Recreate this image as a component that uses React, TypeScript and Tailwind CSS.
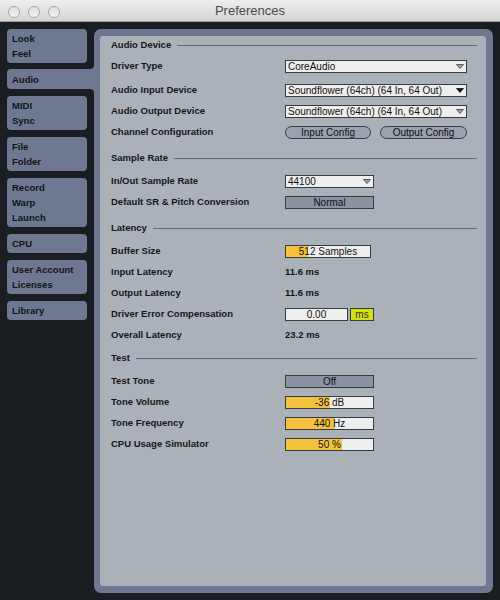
import React from 'react';

const font = { fontFamily: '"Liberation Sans", Arial, sans-serif' };

type Tab = { lines: string[]; active?: boolean };

const tabs: Tab[] = [
  { lines: ['Look', 'Feel'] },
  { lines: ['Audio'], active: true },
  { lines: ['MIDI', 'Sync'] },
  { lines: ['File', 'Folder'] },
  { lines: ['Record', 'Warp', 'Launch'] },
  { lines: ['CPU'] },
  { lines: ['User Account', 'Licenses'] },
  { lines: ['Library'] },
];

const Arrow = ({ solid }: { solid?: boolean }) => (
  <svg width="8" height="5" viewBox="0 0 8 5" className="shrink-0">
    <polygon
      points="0.5,0.5 7.5,0.5 4,4.5"
      fill={solid ? '#111' : '#9aa1ad'}
      stroke={solid ? '#111' : '#3b3f46'}
      strokeWidth="0.8"
    />
  </svg>
);

const Header = ({ title, className = '' }: { title: string; className?: string }) => (
  <div className={`h-[16px] flex items-center ${className}`}>
    <span className="text-[9.5px] font-bold text-[#161616]">{title}</span>
    <div className="flex-1 h-px bg-[#5e6880] ml-[6px]" />
  </div>
);

const Row = ({ label, children, className = '' }: { label: string; children?: React.ReactNode; className?: string }) => (
  <div className={`h-[21px] flex items-center ${className}`}>
    <div className="w-[174px] shrink-0 text-[9.5px] font-bold text-[#161616]">{label}</div>
    {children}
  </div>
);

const Select = ({ value, width, solid }: { value: string; width: string; solid?: boolean }) => (
  <div className={`${width} h-[13px] border border-[#363a41] bg-[#eeeeee] flex items-center justify-between pl-[2px] pr-[2px]`}>
    <span className="text-[10px] leading-none text-[#111]">{value}</span>
    <Arrow solid={solid} />
  </div>
);

const Toggle = ({ value }: { value: string }) => (
  <div className="w-[89px] h-[13px] border border-[#363a41] bg-[#8a93a2] flex items-center justify-center">
    <span className="text-[10px] leading-none text-[#111]">{value}</span>
  </div>
);

const Slider = ({ value, width, fill }: { value: string; width: string; fill: string }) => (
  <div className={`${width} h-[13px] border border-[#363a41] bg-[#eeeeee] relative flex items-center justify-center`}>
    <div className={`absolute left-0 top-0 bottom-0 ${fill} bg-[#f4c23f]`} />
    <span className="relative text-[10px] leading-none text-[#111]">{value}</span>
  </div>
);

const Pill = ({ label, width }: { label: string; width: string }) => (
  <div className={`${width} h-[13px] rounded-full border border-[#363a41] bg-[#9aa2ae] flex items-center justify-center`}>
    <span className="text-[10px] leading-none text-[#111]">{label}</span>
  </div>
);

const Value = ({ v }: { v: string }) => (
  <span className="text-[9.5px] font-bold text-[#161616]">{v}</span>
);

export default function App() {
  return (
    <div className="w-[500px] h-[600px] flex flex-col bg-[#1a1e23] overflow-hidden" style={font}>
      {/* title bar */}
      <div className="h-[22px] shrink-0 relative flex items-center justify-center bg-gradient-to-b from-[#eeeeee] to-[#d4d4d4] border-b border-[#9c9c9c]">
        <div className="absolute left-[8px] top-[6px] flex gap-[8px]">
          {[0, 1, 2].map(i => (
            <div key={i} className="w-[12px] h-[12px] rounded-full border border-[#a9a9a9] bg-gradient-to-b from-[#dcdcdc] to-[#f4f4f4]" />
          ))}
        </div>
        <span className="text-[13px] text-[#4a4a4a]">Preferences</span>
      </div>

      <div className="flex-1 flex pt-[7px] pl-[7px] pr-[7px] pb-[7px]">
        {/* sidebar */}
        <div className="w-[87px] shrink-0 flex flex-col">
          {tabs.map((t, i) => (
            <div
              key={i}
              className={`${t.active ? 'w-[87px] rounded-l-[4px] mt-[6px] h-[20px] relative' : 'w-[80px] rounded-[4px]'} ${i > 1 ? 'mt-[7px]' : ''} bg-[#6e7891] pl-[5px] flex flex-col justify-center py-[2px]`}
            >
              {t.active && (
                <>
                  <div className="absolute right-0 top-[-4px] w-[4px] h-[4px] bg-[#6e7891]">
                    <div className="w-full h-full bg-[#1a1e23] rounded-br-[4px]" />
                  </div>
                  <div className="absolute right-0 bottom-[-4px] w-[4px] h-[4px] bg-[#6e7891]">
                    <div className="w-full h-full bg-[#1a1e23] rounded-tr-[4px]" />
                  </div>
                </>
              )}
              {t.lines.map(l => (
                <div key={l} className="h-[15px] leading-[15px] text-[9.5px] font-bold text-[#141414] whitespace-nowrap">{l}</div>
              ))}
            </div>
          ))}
        </div>

        {/* panel */}
        <div className="flex-1 rounded-[7px] bg-[#6e7891] pl-[6px] pt-[7px] pr-[7px] pb-[7px] flex">
          <div className="flex-1 rounded-[3px] bg-[#abb1b8] pt-[1px] pl-[11px] pr-[9px] flex flex-col">
            <Header title="Audio Device" />
            <Row label="Driver Type" className="mt-[3px]">
              <Select value="CoreAudio" width="w-[182px]" />
            </Row>
            <Row label="Audio Input Device" className="mt-[3px]">
              <Select value="Soundflower (64ch) (64 In, 64 Out)" width="w-[182px]" solid />
            </Row>
            <Row label="Audio Output Device">
              <Select value="Soundflower (64ch) (64 In, 64 Out)" width="w-[182px]" />
            </Row>
            <Row label="Channel Configuration">
              <div className="flex gap-[9px]">
                <Pill label="Input Config" width="w-[86px]" />
                <Pill label="Output Config" width="w-[87px]" />
              </div>
            </Row>

            <Header title="Sample Rate" className="mt-[7px]" />
            <Row label="In/Out Sample Rate" className="mt-[5px]">
              <Select value="44100" width="w-[89px]" />
            </Row>
            <Row label="Default SR & Pitch Conversion">
              <Toggle value="Normal" />
            </Row>

            <Header title="Latency" className="mt-[7px]" />
            <Row label="Buffer Size" className="mt-[5px]">
              <Slider value="512 Samples" width="w-[86px]" fill="w-[22px]" />
            </Row>
            <Row label="Input Latency">
              <Value v="11.6 ms" />
            </Row>
            <Row label="Output Latency">
              <Value v="11.6 ms" />
            </Row>
            <Row label="Driver Error Compensation">
              <div className="flex gap-[2px]">
                <div className="w-[63px] h-[13px] border border-[#363a41] bg-[#eeeeee] flex items-center justify-center">
                  <span className="text-[10px] leading-none text-[#111]">0.00</span>
                </div>
                <div className="w-[24px] h-[13px] border border-[#363a41] bg-[#d5e10c] flex items-center justify-center">
                  <span className="text-[10px] leading-none text-[#333]">ms</span>
                </div>
              </div>
            </Row>
            <Row label="Overall Latency">
              <Value v="23.2 ms" />
            </Row>

            <Header title="Test" className="mt-[4px]" />
            <Row label="Test Tone" className="mt-[5px]">
              <Toggle value="Off" />
            </Row>
            <Row label="Tone Volume">
              <Slider value="-36 dB" width="w-[89px]" fill="w-[44px]" />
            </Row>
            <Row label="Tone Frequency">
              <Slider value="440 Hz" width="w-[89px]" fill="w-[49px]" />
            </Row>
            <Row label="CPU Usage Simulator">
              <Slider value="50 %" width="w-[89px]" fill="w-[56px]" />
            </Row>
          </div>
        </div>
      </div>
    </div>
  );
}
